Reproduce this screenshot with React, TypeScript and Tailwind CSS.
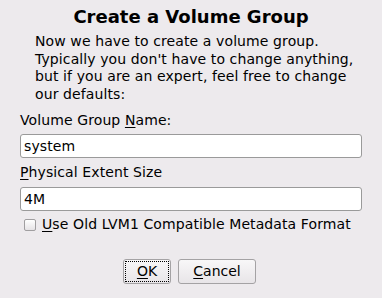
import React from "react";

const U = ({ children }: { children: React.ReactNode }) => (
  <span className="underline underline-offset-[2px] decoration-1">{children}</span>
);

export default function App() {
  return (
    <div
      className="w-[382px] h-[298px] bg-[#edeaed] text-black overflow-hidden flex flex-col"
      style={{ fontFamily: '"DejaVu Sans", sans-serif' }}
    >
      <div className="pt-[6px] h-[33px] text-center text-[18px] leading-[21px] font-bold">
        Create a Volume Group
      </div>
      <div className="pl-[35px] text-[14px] tracking-[0.1px] leading-[17.5px] h-[79px]">
        Now we have to create a volume group.
        <br />
        Typically you don't have to change anything,
        <br />
        but if you are an expert, feel free to change
        <br />
        our defaults:
      </div>
      <div className="px-[20px] flex flex-col text-[14px] tracking-[0.1px]">
        <div className="leading-[17.5px] h-[22px]">
          Volume Group <U>N</U>ame:
        </div>
        <div className="h-[24px] bg-white border border-[#9a9a9a] rounded-[3px] pl-[3px] leading-[22px]">
          system
        </div>
        <div className="mt-[6px] leading-[17.5px] h-[23px]">
          <U>P</U>hysical Extent Size
        </div>
        <div className="h-[24px] bg-white border border-[#9a9a9a] rounded-[3px] pl-[3px] leading-[22px]">
          4M
        </div>
        <div className="mt-[8px] flex items-center pl-[4px] h-[12px]">
          <div className="w-[12px] h-[12px] border border-[#a09ea0] rounded-[2px] bg-gradient-to-b from-[#ffffff] to-[#e6e3e6] shrink-0" />
          <span className="ml-[6px] leading-[17.5px]">
            <U>U</U>se Old LVM1 Compatible Metadata Format
          </span>
        </div>
      </div>
      <div className="mt-[28px] flex justify-center gap-[7px] text-[14px]">
        <div className="ml-[-3px] w-[48px] h-[25px] border border-[#a4a2a4] rounded-[3px] bg-gradient-to-b from-[#f8f7f8] to-[#e8e5e8] p-[1px]">
          <div className="w-full h-full border border-dotted border-black flex items-center justify-center leading-[17px]">
            <U>O</U>K
          </div>
        </div>
        <div className="w-[78px] h-[25px] border border-[#a4a2a4] rounded-[3px] bg-gradient-to-b from-[#f8f7f8] to-[#e8e5e8] flex items-center justify-center leading-[17px]">
          <U>C</U>ancel
        </div>
      </div>
    </div>
  );
}
